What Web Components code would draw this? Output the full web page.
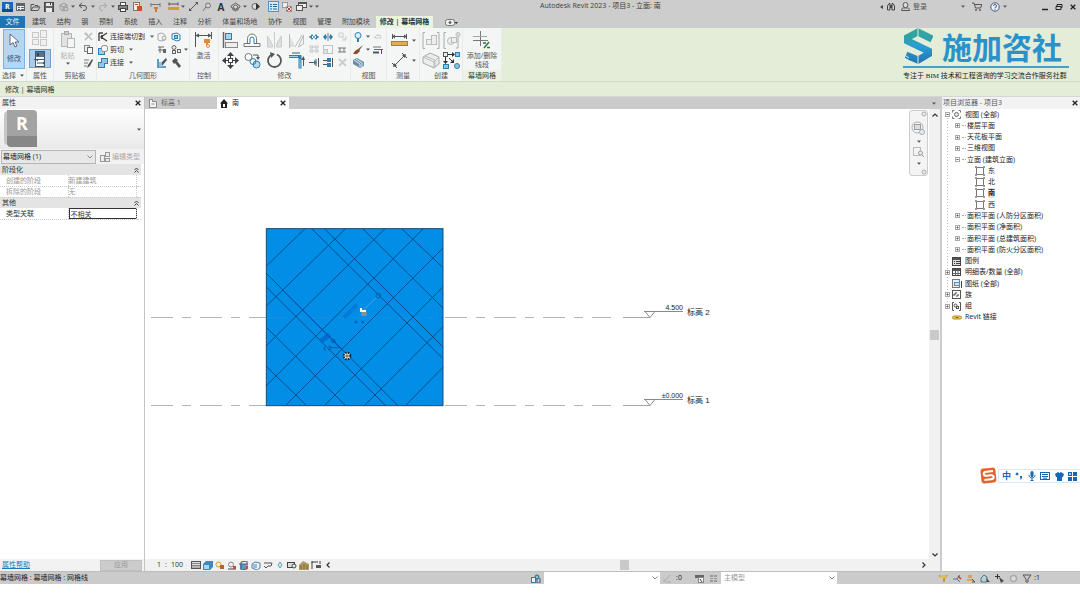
<!DOCTYPE html>
<html lang="zh-CN">
<head>
<meta charset="utf-8">
<title>Autodesk Revit 2023 - 项目3 - 立面: 南</title>
<style>
  html, body { margin: 0; background: #fff; }
  body { font: 7px/10px "Open Sans", "Noto Sans CJK SC", sans-serif; color: #333; }
</style>
</head>
<body>
<rv-app></rv-app>
<script>
const BASE = `
  * { box-sizing: border-box; }
  :host { display: block; box-sizing: border-box; }
  button { display: inline-flex; align-items: center; justify-content: center; margin: 0; padding: 0;
    border: 0; background: none; font: inherit; color: inherit; white-space: nowrap; }
  input, select { font: inherit; color: inherit; margin: 0; border-radius: 0; appearance: none; outline: 0; }
  ul { list-style: none; margin: 0; padding: 0; }
`;
class Base extends HTMLElement {
  constructor() {
    super();
    this.attachShadow({ mode: 'open' });
  }
  connectedCallback() {
    const t = document.createElement('template');
    t.innerHTML = `<style>${BASE}${this.css()}</style>${this.html()}`;
    this.shadowRoot.replaceChildren(t.content.cloneNode(true));
  }
  css() { return ''; }
  html() { return '<slot></slot>'; }
}
const G = '#5f6468', B = '#2d7fb0', L = '#c3c6c8';
const st = (d, c = G, w = 1) => `<path d="${d}" fill="none" stroke="${c}" stroke-width="${w}"/>`;
const fl = (d, c = G) => `<path d="${d}" fill="${c}"/>`;
const bx = (x, y, w, h, f = 'none', s = G) => `<rect x="${x}" y="${y}" width="${w}" height="${h}" fill="${f}" stroke="${s}"/>`;
const ci = (x, y, r, f = 'none', s = G, w = 1) => `<circle cx="${x}" cy="${y}" r="${r}" fill="${f}" stroke="${s}" stroke-width="${w}"/>`;
const ICONS = {
  caret: [4, 3, fl('M0 .5h4L2 2.7z', '#555')],
  revit: [11, 12, fl('M0 1h11v10H0z', '#1767c0') + fl('M0 8h11v3H0z', '#0a4c98') + `<text x="3" y="7.5" font-size="7" font-weight="700" fill="#fff" font-family="Open Sans">R</text>`],
  props: [10, 10, bx(.5, 1.5, 8, 7, '#eee') + fl('M1 2h8v2H1z') + st('M2 5.5h2M5 5.5h3M2 7.5h2M5 7.5h3')],
  open: [11, 10, st('M1 8.5V2.500h3l1 1h3v1.500M1 8.500l2-3.500h7l-2 3.500z', '#555')],
  save: [10, 10, bx(.5, .5, 9, 9, '#666', '#444') + fl('M2 1h6v3H2zM2 6h6v4H2z', '#e8e8e8') + fl('M6 1h1v2H6z', '#444')],
  sync: [11, 10, st('M2 3l4-2 3 2v4L5 9 2 7zM2 3l3 2v4M5 5l4-2', '#999') + ci(8, 7, 2, '#ccc', '#999')],
  undo: [10, 9, st('M4 1L1 3.500l3 2.500M1 3.500h5a2.500 2.500 0 0 1 0 5H5', '#555')],
  redo: [10, 9, st('M6 1l3 2.500L6 6M9 3.500H4a2.500 2.500 0 0 0 0 5h1', '#aaa')],
  print: [10, 10, bx(2.5, .5, 5, 3, '#fff', '#555') + bx(.5, 3.5, 9, 4, '#888', '#444') + bx(2.5, 6.5, 5, 3, '#fff', '#444')],
  pdf: [10, 10, bx(1.5, .5, 6, 8, '#eee', '#777') + fl('M5 4h5v5H5z', '#c9502f') + st('M3 2.500h3', '#c9502f')],
  align: [11, 10, st('M1 1v4M10 1v4M1 2.500h9', '#777') + fl('M4 5h4v2H4zM5 7h2v3H5z', '#d07a34')],
  measure: [11, 9, st('M1 .5v3M10 .5v3M1 2h9', '#555') + fl('M0 5h11v3H0z', '#d99a2b')],
  line: [9, 9, st('M1 8l7-7', '#555') + fl('M0 6l3 3H0zM6 0h3v3z', '#555')],
  tag: [10, 10, st('M1 9l3-4', '#777') + ci(6, 3.5, 2.5, 'none', '#777')],
  cube: [11, 10, st('M5.500 1L10 4v1L5.500 9 1 5V4zM3 5v3h5V5', '#666') + ci(5.5, 5, 2, '#ddd', '#666')],
  section: [9, 9, ci(4, 4.5, 3, '#ddd', '#666') + fl('M5 1l4 3.500L5 8z', '#333')],
  thin: [11, 11, bx(.5, .5, 10, 10, '#d3e8f8', '#5296c8') + st('M2 3.500h2M5 3.500h4M2 5.500h2M5 5.500h4M2 8h2M5 8h4', '#2b6da0')],
  closehid: [10, 10, bx(.5, .5, 5, 5, '#eee', '#999') + bx(4.500, 4.500, 5, 5, '#eee', '#999') + st('M5 5l4 4M9 5L5 9', '#c4382a')],
  switch: [11, 10, bx(2.5, .5, 8, 5, '#eee', '#555') + bx(.5, 3.5, 6, 5, '#eee', '#555') + fl('M3 1h7v1H3z', '#555')],
  panelmin: [13, 7, `<rect x=".5" y=".5" width="9" height="6" rx="2" fill="#eee" stroke="#777"/>` + ci(5, 3.5, 1, '#555') + fl('M9.500 3h3.500l-1.700 2z', '#333')],
  bino: [10, 9, st('M1.500 8V4L3 1.500h1V8zM8.500 8V4L7 1.500H6V8z', '#444') + fl('M4 3h2v3H4z', '#444')],
  user: [9, 9, ci(4.5, 3, 2.5, '#ddd', '#555') + st('M.5 8.500c0-3 2-2.500 4-2.500s4-.5 4 2.500z', '#555')],
  cart: [10, 9, st('M0 1h2l1.500 5h5L10 2.500H3', '#555') + ci(4, 8, .6, '#555') + ci(8, 8, .6, '#555')],
  help: [10, 10, ci(5, 5, 4.2, '#eef4fa', '#3d5f85') + st('M3.500 4a1.500 1.500 0 1 1 1.500 1.500v1M5 7.300v1', '#3d5f85')],
  min: [8, 8, st('M1 6.500h6', '#222', 1.5)],
  restore: [8, 8, st('M2 3.500V1.500h5v3H6M1 3.500h5v3H1z', '#222')],
  x: [6, 6, st('M.7.7l4.600 4.600M5.300.7L.7 5.300', '#222', 1.3)],
  pointer: [12, 16, `<path d="M2 1v11l3-2.500 2 4.500 2-1-2-4h4z" fill="#fff" stroke="#667"/>`],
  typeprops: [18, 17, `<g opacity=".6">` + bx(1.5, 2.5, 6, 5, '#eee', '#aaa') + bx(9.500, .5, 6, 7, '#eee', '#aaa') + bx(1.5, 9.500, 6, 5, '#eee', '#aaa') + bx(9.500, 9.500, 6, 6, '#eee', '#aaa') + '</g>'],
  propsL: [14, 16, bx(2.500, .5, 9, 15, '#4d7798', '#456') + fl('M3 6h8v9H3z', '#f8fbfd') + st('M1 8.500h10M4 12h8', '#456') + fl('M3 9l2 1.500V7.500zM10 10.500v3l2-1.500z', '#456') + fl('M4 2h2v3H4z', '#345')],
  paste: [16, 18, bx(1.500, 2.500, 10, 13, '#e2e2e2', '#b5b5b5') + bx(4.500, .5, 4, 3, '#ccc', '#aaa') + bx(7.500, 7.500, 7, 9, '#f5f5f5', '#b5b5b5')],
  cutx: [9, 9, st('M1 1l7 7M8 1L1 8', '#bbb', 1.500) + ci(2, 2, 1, 'none', '#bbb')],
  copy: [9, 9, bx(.5, .5, 5, 6, '#eee', '#888') + bx(3.500, 2.500, 5, 6, '#fafafa', '#666')],
  match: [10, 10, st('M1 2h5M1 5h4M1 8h3', '#777') + fl('M9 1L5 7l-1 3 3-2 3-6z', '#555')],
  cope: [10, 10, st('M1 1h4M1 1v8M9 1L3 5l6 4', '#444', 1.4) + fl('M3 3h2v4H3z', '#444')],
  cutgeo: [10, 10, bx(.5, 3.500, 6, 6, '#9fcbe6', B) + `<rect x="3.500" y=".5" width="6" height="6" rx="2" fill="#f4f4f4" stroke="#888"/>`],
  join: [10, 10, fl('M3 0h7v6H7v4H0V4h3z', B) + fl('M4 1h5v4H6v4H1V5h3z', '#93c6e6')],
  wallo: [10, 10, st('M1 2l4-1 3 2v5L5 9 1 8z', '#aaa') + ci(7, 6, 2, '#eee', '#aaa')],
  paint: [10, 10, st('M1 2l5-1 3 2v5L6 9 1 7z', B) + bx(3.500, 3.500, 3, 3, '#8cc2e2', B)],
  beam: [10, 9, st('M1 2h6M1 5h8M3 2v6', '#666') + fl('M6 4h3v4H6z', '#666')],
  split: [10, 9, ci(3, 2.500, 2, '#eee', '#666') + bx(1.500, 5.500, 3, 3, '#eee', '#666') + bx(6.500, 4.500, 3, 3, '#eee', '#666')],
  demo0: [10, 10, st('M1 1v8h8', B, 1.500) + fl('M9 0L3 6v2h2l5-6z', '#555') + fl('M2 4h3v5H2z', '#8cc2e2')],
  hammer: [10, 10, fl('M1 3l3-3 3 2-1 1 4 5-2 2-4-5-1 1z', '#555')],
  activate: [19, 18, st('M1.500 1v15M17.500 1v7M2 4.500h15', '#555') + fl('M1 4.500l4-2v4zM18 4.500l-4-2v4z', '#555') + fl('M10 8h6v4h-2v2h-2v-2h-2z', '#e08a3c') + ci(14, 15, 1.500, '#fff', '#e08a3c')],
  alignL: [17, 17, st('M1.500 0v16', '#666', 1.500) + bx(3.500, 1.500, 6, 6, '#a9d2ea', B) + bx(3.500, 10.500, 12, 5, '#eee', '#888')],
  offset: [18, 15, `<path d="M1 10.500h3.500V5.500a4.500 4.500 0 0 1 9 0v5H17v3H1z" fill="#fafafa" stroke="#777"/><path d="M7 10.500V6a2 2 0 0 1 4 0v4.500" fill="none" stroke="${B}"/>` + st('M4 10.500h3M11 10.500h3', B)],
  mirror1: [17, 17, fl('M1 15V3l5 9v3zM15 15V3l-5 9v3z', '#dedfe0') + st('M8.500 0v17M1.500 15V4l5 9v2zM15.500 15V4l-5 9v2z', '#c9cbcc')],
  mirror2: [17, 17, fl('M1 15V3l5 9v3z', '#dedfe0') + st('M1.500 2v14M14 3L7 15M15.500 3v9l-5 3z', '#bbb')],
  move: [17, 17, fl('M8.500 0L12 4H5zM8.500 17L5 13h7zM0 8.500L4 5v7zM17 8.500L13 12V5zM6 6h2V4h1v2h2v2h2v1h-2v2H9v2H8v-2H6V9H4V8h2z', '#3e4246') + fl('M7 7h3v3H7z', '#fff')],
  copyL: [17, 17, ci(4.500, 5, 3.500, '#fafafa', '#777') + ci(12.500, 12.500, 3.500, '#b9dcf0', B) + ci(9, 9.500, 3, 'none', B) + st('M9 3h5v3', '#555') + fl('M12 5h4l-2 3z', '#555')],
  rotate: [17, 17, st('M6 2.500a6.500 6.500 0 1 0 5 0', '#555', 1.800) + fl('M4 0l5 2-4 4z', '#555')],
  trim: [17, 17, st('M1 4.500h11v12', B, 3) + st('M1 4.500h9M12 7v9', '#9fd0ea') + st('M15.500 6v8M4 1h8', '#555') + fl('M13 8l2.500-4L17 8z', '#555')],
  sp1: [10, 8, st('M0 4h3M7 4h3', '#555') + fl('M3 1l2 3-2 3-2-3z', B) + fl('M7 1l2 3-2 3-2-3z', B) + fl('M3 3h1v2H3zM6 3h1v2H6z', '#fff')],
  sp2: [10, 8, st('M5 0v8', '#777') + fl('M2.500 1L4 4 2.500 7 0 4z', B) + fl('M7.500 1L10 4 7.500 7 6 4z', B)],
  pinx: [9, 9, st('M1 1h4v4H1zM4 5l4 3M8 4v4H4', '#ccc')],
  array: [10, 9, st('M1 1h3v2H1zM6 1h3v2H6zM1 5h3v2H1zM6 5h3v2H6z', '#c4c4c4')],
  scale: [10, 9, bx(.5, .5, 9, 8, 'none', '#c4c4c4') + bx(.5, 4.500, 4, 4, '#ddd', '#c4c4c4')],
  pin: [8, 8, st('M2 2h4v4H2zM0 2h2M6 2h2M0 6h2M6 6h2', '#777')],
  ext1: [10, 9, st('M0 4.500h5M9.500 0v9M7 1v7', '#555') + fl('M5 2l3 2.500L5 7z', B)],
  ext2: [10, 9, st('M9.500 0v9M0 2.500h5M0 6.500h5', '#555') + fl('M4 0h4v4H4zM4 5h4v4H4z', B)],
  del: [9, 9, st('M1 1l7 7M8 1L1 8', '#ccc', 2)],
  bulb: [8, 10, `<circle cx="4" cy="3.500" r="3" fill="#d9eefb" stroke="${B}"/>` + fl('M3 6.500h2V10H3z', B)],
  hide: [10, 8, st('M2 5c0-4 6-4 6 0zM1 5l3-3 4 1', '#ccc')],
  brush: [10, 9, fl('M10 0L5 4l1 2z', '#666') + fl('M5 4l2 2-3 3H0l2-3z', '#8c4a22')],
  lw: [10, 8, st('M0 1h8', '#777') + st('M1 3.500h9', B) + st('M0 6.500h6', '#555', 2) + st('M8.500 3v5', '#555')],
  box3: [11, 10, fl('M0 2l4-2 7 4v4L7 10 0 6z', '#6b8ea6') + st('M1 2l6 4v3M3 1l6 4v4', '#d9edf8')],
  ruler: [17, 13, st('M1.500 0v5M15.500 0v5M1 2.500h15', '#555') + fl('M1 2.500l3-2v4zM16 2.500l-3-2v4z', '#555') + bx(.5, 7.500, 16, 4, '#e4ac4d', '#b87d1d')],
  dim: [17, 17, st('M3 14L14 3M1 11l5 5M11 1l5 5', '#555') + fl('M2 15l1-4 3 3zM15 2l-4 1 3 3z', '#555')],
  cr1: [18, 17, st('M3 .5H1v16h2M15 .5h2v16h-2', '#aaa') + bx(4.500, 7.500, 5, 5, '#eee', '#bbb') + bx(9.500, 3.500, 5, 9, '#eee', '#bbb')],
  cr2: [18, 17, st('M3 .5H1v16h2M15 5v11h-2', '#aaa') + ci(8, 9, 3.500, '#eee', '#bbb') + ci(15, 2.500, 2, '#ddd', '#bbb') + bx(8.500, 5.500, 5, 5, '#eee', '#bbb')],
  cr3: [18, 17, `<path d="M1 5l7-4 9 4v7l-5 4-11-5z" fill="#ececec" stroke="#aaa"/>` + st('M1 5l11 5v6M12 10l5-5M3 4l10 4v7', '#bbb')],
  cr4: [17, 17, bx(.5, .5, 4, 4, '#eee', '#555') + bx(12.500, .5, 4, 4, '#8cc2e2', B) + bx(.5, 12.500, 5, 4, '#8cc2e2', B) + ci(14, 14, 2.500, '#8cc2e2', B) + st('M5 2.500h5M2.500 5v5M6 6l4 4', '#333') + fl('M9 0l3 2.500L9 5zM0 9h5l-2.500 3zM11 7v4H7z', '#333')],
  addgrid: [18, 18, st('M7.500 0v15M0 9.500h15', '#777') + st('M0 5.500h14', '#9aa') + st('M11 17l5-6M10 12h3M14 16.500h3', '#2f7a3f', 1.500)],
  sheet: [8, 9, `<path d="M.5.5h3v2h4v6h-7z" fill="#f4f4f4" stroke="#888"/>` + st('M2.500 5h3', '#888')],
  house: [8, 9, fl('M4 0l4 4.500H7V9H1V4.500H0z', '#222') + fl('M3 5h2v3H3z', '#fff')],
  edittype: [10, 10, bx(.5, 3.500, 4, 6, '#eee', '#999') + bx(5.500, .5, 4, 4, '#eee', '#999') + bx(5.500, 6.500, 4, 3, '#eee', '#999')],
  dbl: [5, 6, st('M.5 3l2-2 2 2M.5 5.500l2-2 2 2', '#444')],
  chev: [6, 4, st('M.5.5L3 3 5.500.5', '#888')],
  up: [6, 4, st('M.5 3.500L3 1l2.500 2.500', '#333', 1.200)],
  down: [6, 4, st('M.5.5L3 3 5.500.5', '#333', 1.200)],
  right: [4, 6, st('M.5.5L3 3 .5 5.500', '#333', 1.200)],
  left: [4, 6, st('M3.500.5L1 3l2.500 2.500', '#333', 1.200)],
  leftfill: [3, 4, fl('M3 0v4L0 2z', '#444')],
  wheel: [15, 15, ci(6.500, 6.500, 5.500, '#f4f4f4', '#a6aaad') + bx(3.500, 3.500, 6, 5, '#ddd', '#9a9fa3') + ci(11, 11, 2.500, '#eee', '#a6aaad')],
  zoomr: [12, 12, bx(.5, 1.500, 7, 8, 'none', '#bbb') + ci(7.500, 7, 2, '#eee', '#999') + st('M9 9l2 2', '#999')],
  dot: [6, 6, ci(3, 3, 2, '#eee', '#aaa')],
  plus: [5, 5, bx(.5, .5, 4, 4, '#fff', '#aaa') + st('M1.500 2.500h2M2.500 1.500v2', '#555')],
  minus: [5, 5, bx(.5, .5, 4, 4, '#fff', '#aaa') + st('M1.500 2.500h2', '#555')],
  views: [9, 9, ci(4.500, 4.500, 2, '#eee', '#666') + st('M.5 2.500v-2h2M8.500 2.500v-2h-2M.5 6.500v2h2M8.500 6.500v2h-2', '#777')],
  elev: [10, 10, `<rect x="1.500" y="1.500" width="7" height="7" fill="#fff" stroke="#777"/>` + fl('M0 0h2v2H0zM8 0h2v2H8zM0 8h2v2H0zM8 8h2v2H8z', '#999')],
  legend: [9, 9, bx(.5, .5, 8, 8, '#ddd', '#444') + fl('M1 1h7v2H1z', '#555') + st('M2 4.500h1M4 4.500h4M2 6.500h1M4 6.500h4', '#444')],
  sched: [9, 8, bx(.5, .5, 8, 7, '#fff', '#444') + fl('M1 1h7v2H1z', '#555') + st('M1 5.500h7M3.500 3v4M6 3v4', '#666')],
  sheets: [10, 9, bx(.5, .5, 7, 8, '#eee', '#777') + bx(2.500, 3.500, 5, 3, '#cde3f2', '#5a8db5') + st('M9.500 2v7', '#444')],
  family: [9, 9, bx(.5, .5, 8, 8, '#fff', '#555') + st('M2 6V4h2V2M5 7V5h2', '#444')],
  group: [9, 9, st('M2 .5H.5v8H2M7 .5h1.500v8H7', '#555') + ci(3.500, 3.500, 1.500, '#eee', '#555') + bx(4.500, 4.500, 2, 2, '#eee', '#555')],
  link: [10, 5, `<rect x=".5" y="1" width="9" height="3" rx="1.500" fill="#f0cd6a" stroke="#b98a1c"/>` + st('M3.500 2.500h3', '#8a6510')],
  detail: [10, 8, bx(.5, .5, 9, 7, '#ddd', '#555') + st('M1 2.500h8M1 4.500h8M1 6h8', '#888')],
  shade: [10, 9, fl('M0 3l3-3h7v6L7 9H0z', '#3d8ac0') + fl('M1 4h5v4H1z', '#a8d5f0')],
  sun: [10, 9, ci(3.500, 3.500, 2.500, '#fff3c8', '#d99a2b') + fl('M5 4h4v4H5z', '#b0623a')],
  shadow: [10, 9, ci(4, 3.500, 2.500, '#eee', '#888') + fl('M1 7h8v2H1z', '#99a') + fl('M6 5h3v3H6z', '#c0522f')],
  crop: [10, 9, fl('M1 3h6v5H1z', '#5a9bc8') + st('M2 1l6-1v8l-6 1zM0 3h9', '#557') + fl('M7 5h2v3H7z', '#c0522f')],
  crop2: [10, 9, st('M1 3l3-2 5 1v5L6 9 1 7z', '#5a7fa0') + fl('M2 3h4v4H2z', '#8cc2e2')],
  glasses: [10, 7, st('M1 1h8l-1 3H5L3 6 1 4', '#555')],
  drop: [6, 8, `<path d="M3 1l2 3-2 3-2-3z" fill="#cfeaf8" stroke="#5aa3c8"/>`],
  worksh: [10, 8, bx(.5, 1.500, 7, 5, '#ddd', '#444') + ci(7, 5, 2, '#eee', '#444')],
  hotel: [10, 9, fl('M0 4l4-4 6 3v6H0z', '#b39a5a') + st('M2 8V4M5 8V3M8 8V4', '#665')],
  constr: [10, 8, st('M1 8V1h6M0 1h2M9 0v3', '#444') + fl('M5 4h5v3H5z', '#555')],
  wshare: [10, 9, bx(.5, 3.500, 4, 5, '#e2f2fa', B) + ci(6, 3, 2, '#8cc2e2', '#2a5f85') + st('M6 5v4h3V4', '#2a5f85')],
  edreq: [9, 9, st('M1 8L7 1M3 8h5M1 5v3', '#aaa')],
  wset: [9, 9, fl('M0 1h9v3H0z', '#666') + bx(3.500, 3.500, 5, 5, '#f4f4f4', '#888') + st('M5 5l2 3', '#444')],
  dopt: [9, 9, fl('M1 1h7v7H1z', '#999') + st('M1 3.500h7M1 5.500h7M4.500 1v7', '#ccc')],
  s1: [10, 9, st('M1 2h7l-2 3v3', '#c39a2c', 2) + fl('M2 1h6v3H2z', '#e0bf52')],
  s2: [10, 9, st('M1 5h4l3-4M5 5l3 3', '#4779a8') + st('M6 2l3 3', '#c03a2a', 1.500)],
  s3: [10, 9, fl('M2 1h4v3H2zM1 5h6v2H1z', '#d9a455') + st('M6 5l3 3M6 8h3', '#555')],
  s4: [10, 9, st('M1 8V4l3-3 3 2v5z', '#3d7ca8') + fl('M6 4l4 4H7z', '#444')],
  s5: [10, 9, fl('M3 0h1v2h2v1H4v2H3V3H1V2h2z', '#333') + fl('M5 3l5 4-2 1-1 1z', '#444')],
  s6: [9, 9, ci(4.500, 4.500, 3, '#ddd', '#aaa', 1.500)],
  funnel: [10, 9, st('M1 1h8L6 5v3H4V5z', '#555')],
  mic: [8, 10, `<rect x="2.500" y="0" width="3" height="6" rx="1.500" fill="#1668b4"/>` + st('M1 4c0 4 6 4 6 0M4 7v3M2.500 9.500h3', '#1668b4')],
  kbd: [10, 8, bx(.5, .5, 9, 7, '#fff', '#1668b4') + st('M2 2.500h6M2 4.500h6M3 6.200h4', '#1668b4')],
  shirt: [9, 9, fl('M0 2l3-2 1.500 1L6 0l3 2-1 3H7v4H2V5H1z', '#1668b4')],
  grid4: [9, 9, bx(.5, .5, 3, 3, '#9cc8e8', '#1668b4') + fl('M5 0h4v4H5zM0 5h4v4H0zM5 5h4v4H5z', '#1668b4')],
  punct: [8, 8, ci(2, 2, 1, '#1668b4', '#1668b4') + fl('M5 4h2v2L5.500 8z', '#1668b4')],
  slogo: [30, 36, `<defs><linearGradient id="g" gradientUnits="userSpaceOnUse" x1="0" y1="0" x2="0" y2="36"><stop offset="0" stop-color="#35a99a"/><stop offset=".35" stop-color="#2f9fae"/><stop offset=".5" stop-color="#2a9ed6"/><stop offset="1" stop-color="#1f72b4"/></linearGradient></defs>
    <path d="M29 11L15 4 4.500 9.500V13L25.500 23V26L15 32 3 27" fill="none" stroke="url(#g)" stroke-width="7"/>
    <path d="M15 0v8M15 28v8" stroke="#e4edd8"/><path d="M0 26l6 4M0 29l5 3" stroke="#e4edd8"/>`]
};
class RvIcon extends Base {
  css() { return ':host{display:inline-flex;flex:none}svg{display:block}'; }
  html() {
    const [w, h, m] = ICONS[this.getAttribute('name')];
    return `<svg width="${w}" height="${h}" viewBox="0 0 ${w} ${h}" aria-hidden="true">${m}</svg>`;
  }
}
customElements.define('rv-icon', RvIcon);
const icon = n => `<rv-icon name="${n}"></rv-icon>`;
const ib = (n, c = 'i') => `<button class="${c}" aria-label="${n}">${icon(n)}</button>`;

class RvTitlebar extends Base {
  css() { return `
    :host { display: grid; grid-template-columns: 50% auto 1fr; align-items: start; height: 16px; background: #cdcdcd; }
    nav, .r { display: flex; align-items: center; height: 13px; }
    .i { width: 14px; } .c { width: 6px; } .s { width: 4px; }
    b { width: 14px; text-align: center; font: 700 10px/12px "Open Sans"; color: #333; }
    h1 { margin: 0; font: 400 7px/11px "Open Sans","Noto Sans CJK SC",sans-serif; color: #3c3c3c; white-space: nowrap; }
    .r { justify-content: flex-end; }
    .login { width: 16px; color: #555; } .gap { width: 32px; } .gap2 { width: 30px; }`; }
  html() {
    const q = 'revit props open save sync . undo . redo . print pdf | align | measure . line tag A cube . section | thin closehid switch . .'.split(' ');
    return `<nav>${q.map(n => n === '.' ? ib('caret', 'c') : n === '|' ? '<span class="s"></span>' : n === 'A' ? '<b>A</b>' : ib(n)).join('')}</nav>
    <h1>Autodesk Revit 2023 - 项目3 - 立面: 南</h1>
    <div class="r">${ib('leftfill', 'c')}${ib('bino')}${ib('user')}<button class="login">登录</button><span class="gap"></span>${ib('caret', 'c')}<span class="s"></span>${ib('cart')}<span class="s"></span>${ib('help')}${ib('caret', 'c')}<span class="gap2"></span>${ib('min')}${ib('restore')}${ib('x')}</div>`;
  }
}
customElements.define('rv-titlebar', RvTitlebar);

class RvTabs extends Base {
  css() { return `
    :host { display: flex; height: 12px; background: #cdcdcd; color: #444; }
    .file { width: 25px; background: #1e74b4; color: #e8f2fa; }
    .mid { display: flex; justify-content: space-between; width: 338px; margin: 0 6px 0 7px; }
    .on { width: 57px; background: #eaf3de; color: #234; font-weight: 600; }
    .m { margin-left: 12px; }`; }
  html() {
    return `<button class="file">文件</button><div class="mid">${'建筑 结构 钢 预制 系统 插入 注释 分析 体量和场地 协作 视图 管理 附加模块'.split(' ').map(t => `<button>${t}</button>`).join('')}</div><button class="on">修改 | 幕墙网格</button>${ib('panelmin', 'm')}`;
  }
}
customElements.define('rv-tabs', RvTabs);

class RvPanel extends Base {
  css() { return `
    :host { display: flex; flex-direction: column; flex: none; height: 53px; background: #f4f5f5; border-right: 1px solid #e9ebe9; }
    .b { flex: 1; display: flex; padding-top: 1px; }
    footer { display: flex; gap: 4px; align-items: center; justify-content: center; height: 11px; white-space: nowrap; color: #555; }
    :host([accent]) footer { background: #ecf2e4; color: #243; }`; }
  html() { return `<div class="b"><slot></slot></div><footer>${this.getAttribute('label')}${this.hasAttribute('menu') ? icon('caret') : ''}</footer>`; }
}
customElements.define('rv-panel', RvPanel);

class RvBrand extends Base {
  css() { return `
    :host { width: 166px; margin-right: 11px; }
    .t { display: flex; align-items: flex-start; gap: 9px; height: 40px; border-bottom: 2px solid #4a9fc0; }
    strong { font: 700 30px/36px "Noto Sans CJK SC",sans-serif; color: #2b92c9; white-space: nowrap; }
    p { margin: 0; font: 7px/16px "Liberation Serif","Noto Sans CJK SC",sans-serif; color: #222; white-space: nowrap; }`; }
  html() { return `<div class="t">${icon('slogo')}<strong>施加咨社</strong></div><p>专注于 BIM 技术和工程咨询的学习交流合作服务社群</p>`; }
}
customElements.define('rv-brand', RvBrand);

class RvRibbon extends Base {
  css() { return `
    :host { background: #e4edd8; }
    .row { display: flex; height: 53px; justify-content: space-between; }
    .panels { display: flex; }
    .w27 { width: 27px; } .w29 { width: 29px; } .w33 { width: 33px; } .w36 { width: 36px; } .w39 { width: 39px; } .w43 { width: 43px; } .w93 { width: 93px; } .w132 { width: 132px; }
    .big { flex-direction: column; justify-content: flex-start; width: 27px; gap: 2px; padding-top: 2px; line-height: 9px; color: #555; height: 41px; }
    .big.w39 { width: 38px; }
    .sel { background: #b5d6f0; outline: 1px solid #7fb0dc; outline-offset: -1px; width: 22px; margin-left: 3px; height: 40px; padding-top: 4px; gap: 5px; color: #357; }
    .dim { color: #b4b4b4; }
    .col { display: grid; grid-template-rows: repeat(3, 13px); padding-top: 1px; }
    .two { display: grid; grid-auto-rows: 20px; padding-top: 1px; align-content: start; }
    .i { width: 14px; } .l { width: 22px; } .c { width: 6px; }
    .geo { width: 57px; margin-left: 1px; } .geo button { justify-content: flex-start; gap: 2px; }
    .geo rv-icon:last-child { margin-left: 3px; }
    .ps { display: flex; flex-direction: column; align-items: center; width: 27px; gap: 2px; padding-top: 1px; }
    .ps .on { width: 22px; height: 19px; background: #a9cdea; outline: 1px solid #6d9fcb; outline-offset: -1px; }
    .mod { grid-template-columns: repeat(4, 22px); }
    .sm { grid-template-columns: repeat(3, 14px); }
    .vw { grid-template-columns: 14px 6px 14px; }
    .ms { grid-template-columns: 24px 6px; } .ms .i { width: 24px; }
    .cr { grid-template-columns: 21px 21px; } .cr .l { width: 21px; }
    .bar { display: flex; align-items: center; height: 15px; border-top: 1px solid #d3dbc8; padding: 1px 5px 0; color: #2b2b2b; }
    `; }
  html() {
    const g = (n, t) => `<button>${icon(n)}${t}${icon('caret')}</button>`;
    return `<div class="row"><div class="panels">
      <rv-panel class="w27" label="选择" menu><button class="big sel">${icon('pointer')}修改</button></rv-panel>
      <rv-panel class="w27" label="属性"><div class="ps">${ib('typeprops')}${ib('propsL', 'on')}</div></rv-panel>
      <rv-panel class="w43" label="剪贴板"><button class="big dim">${icon('paste')}粘贴${icon('caret')}</button><div class="col">${['cutx', 'copy', 'match'].map(n => ib(n)).join('')}</div></rv-panel>
      <rv-panel class="w93" label="几何图形"><div class="col geo">${g('cope', '连接端切割')}${g('cutgeo', '剪切')}${g('join', '连接')}</div><div class="col">${['wallo', 'beam', 'demo0'].map(n => ib(n)).join('')}</div><div class="col">${['paint', 'split', 'hammer'].map(n => ib(n)).join('')}</div><div class="col"><span></span>${ib('caret', 'c')}</div></rv-panel>
      <rv-panel class="w29" label="控制"><button class="big">${icon('activate')}激活</button></rv-panel>
      <rv-panel class="w132" label="修改"><div class="two mod">${['alignL', 'offset', 'mirror1', 'mirror2', 'move', 'copyL', 'rotate', 'trim'].map(n => ib(n, 'l')).join('')}</div><div class="col sm">${['sp1', 'sp2', 'pinx', 'array', 'scale', 'pin', 'ext1', 'ext2', 'del'].map(n => ib(n)).join('')}</div></rv-panel>
      <rv-panel class="w36" label="视图"><div class="col vw">${ib('bulb')}${ib('caret', 'c')}${ib('hide')}${ib('brush')}${ib('caret', 'c')}${ib('lw')}${ib('box3')}</div></rv-panel>
      <rv-panel class="w33" label="测量"><div class="two ms">${ib('ruler')}${ib('caret', 'c')}${ib('dim')}${ib('caret', 'c')}</div></rv-panel>
      <rv-panel class="w43" label="创建"><div class="two cr">${['cr1', 'cr2', 'cr3', 'cr4'].map(n => ib(n, 'l')).join('')}</div></rv-panel>
      <rv-panel class="w39" label="幕墙网格" accent><button class="big w39">${icon('addgrid')}<span>添加/删除<br>线段</span></button></rv-panel>
    </div><rv-brand></rv-brand></div><div class="bar">修改 | 幕墙网格</div>`;
  }
}
customElements.define('rv-ribbon', RvRibbon);

class RvProps extends Base {
  css() { return `
    :host { display: flex; flex-direction: column; width: 145px; flex: none; background: #fff; border-right: 1px solid #c4c4c4; }
    header, .foot { display: flex; justify-content: space-between; align-items: center; height: 12px; background: #f2f2f2; padding: 0 3px 0 2px; }
    .prev { display: flex; align-items: center; justify-content: space-between; height: 40px; padding: 0 3px 0 4px; background: linear-gradient(#fdfdfd, #e9e9e9); }
    .type { display: flex; align-items: center; gap: 4px; height: 15px; background: #f2f2f2; padding-left: 1px; color: #aaa; }
    .type button { gap: 2px; }
    .combo { display: grid; align-items: center; color: #222; }
    .combo > * { grid-area: 1 / 1; }
    .combo rv-icon { justify-self: end; margin-right: 3px; }
    select { width: 95px; height: 14px; padding: 0 1px; border: 1px solid #b5b5b5; background: #e8e8e8; }
    table { width: 141px; border-collapse: collapse; table-layout: fixed; }
    td, th { height: 11px; padding: 0; font-weight: 400; text-align: left; border-bottom: 1px dotted #ccc; line-height: 9px; white-space: nowrap; }
    td { border-left: 1px dotted #ccc; }
    th { padding-left: 6px; }
    .g th { padding: 0 2px; background: #e4e4e4; color: #333; border: 0; }
    .g div { display: flex; justify-content: space-between; align-items: center; }
    .d { color: #999; }
    td input { display: block; width: 68px; height: 11px; padding: 0 1px; border: 1px solid #333; background: #fff; }
    .foot { margin-top: auto; padding: 0 2px; }
    a { color: #1f78b8; }
    .foot button { width: 42px; height: 11px; background: #ccc; border: 1px solid #bfbfbf; color: #999; }
    `; }
  html() {
    return `<header>属性<button aria-label="关闭">${icon('x')}</button></header>
    <div class="prev"><svg width="34" height="38" viewBox="0 0 34 38"><path d="M0 5q0-4 5-4l3 34H4q-4 0-4-4z" fill="#c6c6c6"/><path d="M3 0h26q4 0 4 4v22H3z" fill="#a3a3a3"/><path d="M3 26h30v11H7q-4 0-4-4z" fill="#878787"/><text x="12" y="20" font-family="Open Sans" font-weight="700" font-size="18" fill="#fff">R</text></svg>${icon('caret')}</div>
    <div class="type"><span class="combo"><select aria-label="类型"><option>幕墙网格 (1)</option></select>${icon('chev')}</span><button>${icon('edittype')}编辑类型</button></div>
    <table><colgroup><col style="width:68px"><col style="width:68px"><col></colgroup>
      <tr class="g"><th colspan="3"><div>阶段化${icon('dbl')}</div></th></tr>
      <tr class="d"><th>创建的阶段</th><td>新建建筑</td><td></td></tr>
      <tr class="d"><th>拆除的阶段</th><td>无</td><td></td></tr>
      <tr class="g"><th colspan="3"><div>其他${icon('dbl')}</div></th></tr>
      <tr><th><label for="rel">类型关联</label></th><td><input id="rel" value="不相关"></td><td></td></tr>
    </table>
    <div class="foot"><a href="#help">属性帮助</a><button disabled>应用</button></div>`;
  }
}
customElements.define('rv-properties', RvProps);

class RvDrawing extends Base {
  css() { return `:host{overflow:hidden}svg{display:block}`; }
  html() {
    const lines = [[155,20,549,410],[193,20,549,375],[308,20,549,258],[425,20,549,137],[18,153,412,549],[18,194,375,549],[18,315,255,549],[18,432,138,549],
      [18,133,135,20],[18,253,257,20],[18,372,375,20],[18,492,490,20],[78,549,549,78],[195,549,549,195],[315,549,549,314],[438,549,549,436]];
    const level = (y, v, n) => `<path d="M151 ${y - .5}H611" stroke="#b5b5b5" stroke-dasharray="22 9 9 9"/><path d="M623 ${y - .5}h27" stroke="#aaa"/><path d="M644 ${y - 6.5}h39M645 ${y - 6.5}l5 6 5-6" fill="none" stroke="#8a8a8a"/>
      <text x="683" y="${y - 8}" text-anchor="end" font-size="7">${v}</text><text x="687" y="${y - 3}" font-size="8">${n}</text>`;
    return `<svg width="784" height="450" viewBox="145 109 784 450" font-family="Liberation Sans, Noto Sans CJK SC, sans-serif" fill="#222">
      ${level(318, '4.500', '标高 2')}${level(406, '±0.000', '标高 1')}
      <svg x="260" y="222" width="190" height="190" viewBox="0 0 570 570">
        <rect x="19" y="20" width="530" height="531" fill="#028ee6" stroke="#1d4a70" stroke-width="3"/>
        <path d="M20 288h528" stroke="#2f93d4" stroke-width="2" stroke-dasharray="60 24 24 24"/>
        <g stroke="#0a4f88" stroke-width="3">${lines.map(([a, b, c, d]) => `<path d="M${a} ${b}L${c} ${d}"/>`).join('')}</g>
        <g stroke="#0b6fd0" stroke-width="2" fill="none"><path d="M68 204l180 181" stroke="#0654b4" stroke-width="3"/><path d="M312 262l38-36" stroke="#5fb4ee"/><circle cx="355" cy="221" r="7" stroke="#0a4f90"/><circle cx="220" cy="357" r="5" stroke="#0a3f80"/><path d="M193 373v10h5M205 373h5v10h-5M210 377h30" stroke="#0a3f80"/><path d="M235 395q-6 14 8 18"/></g>
        <g fill="#0560c8"><path d="M180 350l24-18 10 12-26 18z" opacity=".7"/><path d="M248 282l40-38 6 8-38 40z" opacity=".45"/><path d="M284 296h8v8h-8zM298 298h8M304 296h8v8h-8z"/></g>
        <path d="M300 258v12h18v-6h-12v-6z" fill="#fff"/><path d="M304 270h16v12h-16z" fill="#8a8f94"/>
        <circle cx="261" cy="402" r="10" fill="#fff" stroke="#222" stroke-width="6" stroke-dasharray="5 3"/>
        <path d="M255 402h12M261 396v12" stroke="#555" stroke-width="3"/>
      </svg></svg>`;
  }
}
customElements.define('rv-drawing', RvDrawing);

class RvView extends Base {
  css() { return `
    :host { display: flex; flex-direction: column; flex: 1; min-width: 0; background: #fff; }
    .tabs { display: flex; align-items: stretch; height: 12px; background: #cbcbcb; padding: 0 2px 0 4px; }
    .tab { display: flex; align-items: center; gap: 4px; color: #666; width: 68px; }
    .on { background: #fff; width: 72px; padding: 0 3px; color: #222; } .on button { margin-left: auto; }
    .menu { margin-left: auto; width: 8px; }
    .mid { flex: 1; display: flex; position: relative; min-height: 0; }
    rv-drawing { flex: 1; min-width: 0; }
    .nav { position: absolute; right: 12px; top: 1px; width: 19px; height: 66px; border: 1px solid #ccc; border-radius: 3px; background: #f4f4f4; display: flex; flex-direction: column; align-items: center; justify-content: space-between; }
    .nav .a { align-self: flex-end; display: flex; }
    .vs { width: 11px; background: #f1f1f1; display: flex; flex-direction: column; align-items: center; justify-content: space-between; padding: 4px 0 2px; }
    .thumb { width: 9px; height: 10px; background: #c9c9c9; }
    .bot { display: flex; align-items: center; height: 12px; background: #f1f1f1; padding-left: 12px; }
    .sc { width: 26px; justify-content: space-between; margin-right: 7px; }
    .bi { width: 12px; }
    .hs { flex: 1; display: flex; align-items: center; justify-content: center; padding-right: 8px; }
    .e { margin-right: 14px; display: flex; }
    `; }
  html() {
    return `<div class="tabs"><div class="tab">${icon('sheet')}标高 1</div><div class="tab on">${icon('house')}南<button aria-label="关闭">${icon('x')}</button></div>${ib('caret', 'menu')}</div>
    <div class="mid"><rv-drawing></rv-drawing><div class="nav"><span class="a">${icon('dot')}</span>${ib('wheel')}${icon('caret')}${ib('zoomr')}${icon('caret')}<span class="a">${icon('dot')}</span></div>
    <div class="vs">${icon('up')}<span class="thumb"></span>${icon('down')}</div></div>
    <div class="bot"><button class="sc"><span>1</span><span>:</span><span>100</span></button>${'detail shade sun shadow crop crop2 glasses drop worksh hotel constr left'.split(' ').map(n => ib(n, 'bi')).join('')}<div class="hs"><span class="thumb"></span></div><span class="e">${icon('right')}</span></div>`;
  }
}
customElements.define('rv-view', RvView);

class RvBrowser extends Base {
  css() { return `
    :host { width: 140px; flex: none; background: #fff; border-left: 2px solid #ccc; }
    header { display: flex; justify-content: space-between; align-items: center; height: 12px; padding: 0 2px 0 1px; background: #f2f2f2; color: #555; }
    ul { display: grid; grid-auto-rows: minmax(0, 1fr); height: 214px; color: #222; background: repeating-linear-gradient(#bbb 0 1px, transparent 1px 3px) 5px 6px / 1px 190px no-repeat; }
    li { display: flex; align-items: center; white-space: nowrap; }
    .x { width: 10px; display: flex; justify-content: center; } .ic { width: 13px; display: flex; }
    .l1 { padding-left: 10px; } .l2 { padding-left: 33px; }
    .l1::before { order: 1; content: ""; width: 4px; border-top: 1px dotted #aaa; margin-right: 1px; } .l1 span:last-child { order: 2; }
    .sel { background: #e6e6e6; font-weight: 600; }`; }
  html() {
    const rows = ['0-views 视图 (全部)', '1+ 楼层平面', '1+ 天花板平面', '1+ 三维视图', '1- 立面 (建筑立面)', '2 东', '2 北', '2 南', '2 西', '1+ 面积平面 (人防分区面积)', '1+ 面积平面 (净面积)', '1+ 面积平面 (总建筑面积)', '1+ 面积平面 (防火分区面积)', '0.legend 图例', '0+sched 明细表/数量 (全部)', '0.sheets 图纸 (全部)', '0+family 族', '0+group 组', '0.link Revit 链接'];
    return `<header>项目浏览器 - 项目3<button aria-label="关闭">${icon('x')}</button></header><ul>${rows.map(r => {
      const k = r.indexOf(' '), h = r.slice(0, k), t = r.slice(k + 1), lv = h[0], e = h[1], n = h.slice(2);
      return `<li class="l${lv}">${lv < 2 ? `<span class="x">${e === '+' ? icon('plus') : e === '-' ? icon('minus') : ''}</span>` : ''}${n ? `<span class="ic">${icon(n)}</span>` : lv === '2' ? `<span class="ic">${icon('elev')}</span>` : ''}<span class="${t === '南' ? 'sel' : ''}">${t}</span></li>`;
    }).join('')}</ul>`;
  }
}
customElements.define('rv-browser', RvBrowser);

class RvStatus extends Base {
  css() { return `
    :host { display: flex; align-items: center; height: 13px; background: #cbcbcb; border-top: 1px solid #bdbdbd; color: #222; }
    .t { width: 529px; }
    .i { width: 14px; }
    .combo { display: grid; align-items: center; color: #999; margin-left: 1px; }
    .combo > * { grid-area: 1 / 1; } .combo rv-icon { justify-self: end; margin-right: 2px; }
    select { width: 116px; height: 12px; border: 0; background: #fff; padding: 0 3px; }
    .n { width: 10px; text-align: center; margin-right: 8px; }
    .r { margin-left: auto; display: flex; align-items: center; margin-right: 40px; }`; }
  html() {
    return `<span class="t">幕墙网格 : 幕墙网格 : 网格线</span>${ib('wshare')}<span class="combo"><select aria-label="工作集"><option></option></select>${icon('chev')}</span>${ib('edreq')}<span class="n">:0</span>${ib('wset')}${ib('dopt')}<span class="combo"><select aria-label="设计选项"><option>主模型</option></select>${icon('chev')}</span><div class="r">${'s1 s2 s3 s4 s5 s6 funnel'.split(' ').map(n => ib(n)).join('')}:1</div>`;
  }
}
customElements.define('rv-status', RvStatus);

class RvIme extends Base {
  css() { return `
    :host { display: flex; align-items: center; }
    .bar { display: flex; align-items: center; justify-content: space-between; width: 82px; height: 14px; padding: 0 3px; border: 1px solid #dbe8f2; border-right: 0; background: #fff; color: #1668b4; font: 700 9px/12px "Noto Sans CJK SC",sans-serif; }
    .s { transform: rotate(-6deg); }`; }
  html() {
    return `<svg class="s" width="18" height="18" viewBox="0 0 18 18"><rect x="1" y="1" width="15" height="15" rx="3" fill="#e0662e"/><path d="M13.500 4.500H7Q4 4.500 4 6.500T7 8.500h3.500q3 0 3 2t-3 2H4" fill="none" stroke="#fff" stroke-width="2"/></svg>
    <div class="bar"><span>中</span>${icon('punct')}${icon('mic')}${icon('kbd')}${icon('shirt')}${icon('grid4')}</div>`;
  }
}
customElements.define('rv-ime', RvIme);

class RvApp extends Base {
  css() { return `
    :host { display: flex; flex-direction: column; height: 100vh; padding-bottom: 24px; position: relative; }
    main { flex: 1; display: flex; min-height: 0; border-top: 1px solid #d6d6d6; }
    rv-ime { position: absolute; right: 0; bottom: 123px; }`; }
  html() { return `<rv-titlebar></rv-titlebar><rv-tabs></rv-tabs><rv-ribbon></rv-ribbon><main><rv-properties></rv-properties><rv-view></rv-view><rv-browser></rv-browser></main><rv-status></rv-status><rv-ime></rv-ime>`; }
}
customElements.define('rv-app', RvApp);
</script>
</body>
</html>
